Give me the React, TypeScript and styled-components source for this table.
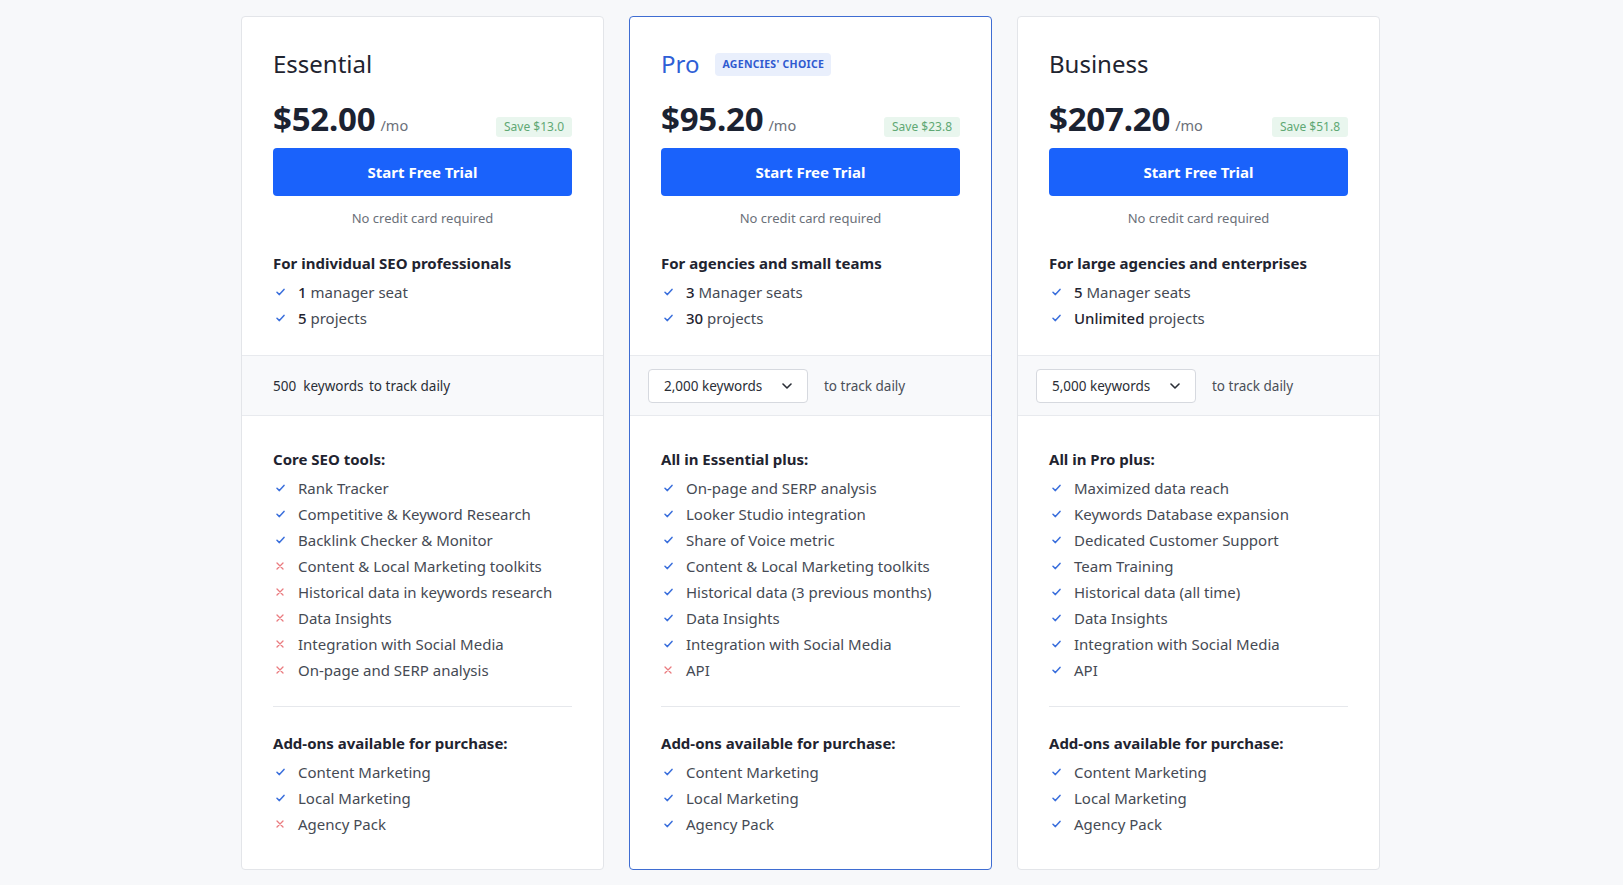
import styled, { createGlobalStyle } from 'styled-components';

type Feature = { label: string; strong?: string; included: boolean };

type Plan = {
  name: string;
  badge?: string;
  highlighted?: boolean;
  price: string;
  save: string;
  audience: string;
  seats: Feature[];
  keywords: string;
  selectable?: boolean;
  featuresTitle: string;
  features: Feature[];
  addons: Feature[];
};

const yes = (label: string, strong?: string): Feature => ({ label, strong, included: true });
const no = (label: string): Feature => ({ label, included: false });

const plans: Plan[] = [
  {
    name: 'Essential',
    price: '$52.00',
    save: 'Save $13.0',
    audience: 'For individual SEO professionals',
    seats: [yes('manager seat', '1'), yes('projects', '5')],
    keywords: '500',
    featuresTitle: 'Core SEO tools:',
    features: [
      yes('Rank Tracker'),
      yes('Competitive & Keyword Research'),
      yes('Backlink Checker & Monitor'),
      no('Content & Local Marketing toolkits'),
      no('Historical data in keywords research'),
      no('Data Insights'),
      no('Integration with Social Media'),
      no('On-page and SERP analysis'),
    ],
    addons: [yes('Content Marketing'), yes('Local Marketing'), no('Agency Pack')],
  },
  {
    name: 'Pro',
    badge: "Agencies' choice",
    highlighted: true,
    price: '$95.20',
    save: 'Save $23.8',
    audience: 'For agencies and small teams',
    seats: [yes('Manager seats', '3'), yes('projects', '30')],
    keywords: '2,000 keywords',
    selectable: true,
    featuresTitle: 'All in Essential plus:',
    features: [
      yes('On-page and SERP analysis'),
      yes('Looker Studio integration'),
      yes('Share of Voice metric'),
      yes('Content & Local Marketing toolkits'),
      yes('Historical data (3 previous months)'),
      yes('Data Insights'),
      yes('Integration with Social Media'),
      no('API'),
    ],
    addons: [yes('Content Marketing'), yes('Local Marketing'), yes('Agency Pack')],
  },
  {
    name: 'Business',
    price: '$207.20',
    save: 'Save $51.8',
    audience: 'For large agencies and enterprises',
    seats: [yes('Manager seats', '5'), yes('projects', 'Unlimited')],
    keywords: '5,000 keywords',
    selectable: true,
    featuresTitle: 'All in Pro plus:',
    features: [
      yes('Maximized data reach'),
      yes('Keywords Database expansion'),
      yes('Dedicated Customer Support'),
      yes('Team Training'),
      yes('Historical data (all time)'),
      yes('Data Insights'),
      yes('Integration with Social Media'),
      yes('API'),
    ],
    addons: [yes('Content Marketing'), yes('Local Marketing'), yes('Agency Pack')],
  },
];

function CheckIcon() {
  return (
    <svg width="9" height="8" viewBox="0 0 9 8" fill="none">
      <path d="M1 4.3 L3.4 6.6 L8 1.4" stroke="#3a6fdc" strokeWidth="1.5" strokeLinecap="round" strokeLinejoin="round" />
    </svg>
  );
}

function CrossIcon() {
  return (
    <svg width="8" height="8" viewBox="0 0 8 8" fill="none">
      <path d="M1 1 L7 7 M7 1 L1 7" stroke="#ea7b7f" strokeWidth="1.3" strokeLinecap="round" />
    </svg>
  );
}

function FeatureList({ items }: { items: Feature[] }) {
  return (
    <List role="list">
      {items.map((item, i) => (
        <Item key={i}>
          <Mark>{item.included ? <CheckIcon /> : <CrossIcon />}</Mark>
          <span>
            {item.strong && <Strong>{item.strong} </Strong>}
            {item.label}
          </span>
        </Item>
      ))}
    </List>
  );
}

function PlanCard({ plan }: { plan: Plan }) {
  return (
    <Card $highlighted={plan.highlighted}>
      <Top>
        <TitleRow>
          <Title $highlighted={plan.highlighted}>{plan.name}</Title>
          {plan.badge && <Badge>{plan.badge}</Badge>}
        </TitleRow>
        <PriceRow>
          <Price>{plan.price}</Price>
          <Period>/mo</Period>
          <Save>{plan.save}</Save>
        </PriceRow>
        <TrialButton>Start Free Trial</TrialButton>
        <Note>No credit card required</Note>
        <Heading>{plan.audience}</Heading>
        <FeatureList items={plan.seats} />
      </Top>
      <KeywordBand>
        {plan.selectable ? (
          <>
            <Select>
              {plan.keywords}
              <svg width="10" height="6" viewBox="0 0 10 6" fill="none">
                <path d="M1 1 L5 5 L9 1" stroke="#2a2e36" strokeWidth="1.6" strokeLinecap="round" strokeLinejoin="round" />
              </svg>
            </Select>
            <TrackText>to track daily</TrackText>
          </>
        ) : (
          <FixedKeywords>
            {plan.keywords}&nbsp;&nbsp;keywords <span>to track daily</span>
          </FixedKeywords>
        )}
      </KeywordBand>
      <Bottom>
        <Heading>{plan.featuresTitle}</Heading>
        <FeatureList items={plan.features} />
        <Divider />
        <Heading>Add-ons available for purchase:</Heading>
        <FeatureList items={plan.addons} />
      </Bottom>
    </Card>
  );
}

export default function App() {
  return (
    <>
      <GlobalStyle />
      <Page>
        {plans.map(plan => (
          <PlanCard key={plan.name} plan={plan} />
        ))}
      </Page>
    </>
  );
}

const GlobalStyle = createGlobalStyle`
  body {
    margin: 0;
    background: #f7f8fa;
    font-family: "Noto Sans", "Open Sans", sans-serif;
    color: #1f2430;
  }
`;

const Page = styled.div`
  display: flex;
  justify-content: center;
  align-items: stretch;
  gap: 25px;
  padding: 16px 2px 17px 0;
`;

const Card = styled.div<{ $highlighted?: boolean }>`
  display: flex;
  flex-direction: column;
  width: 363px;
  box-sizing: border-box;
  background: #fff;
  border: 1px solid ${p => (p.$highlighted ? '#3f6dd2' : '#e3e5e9')};
  border-radius: 4px;
`;

const Top = styled.div`
  display: flex;
  flex-direction: column;
  padding: 32px 31px 24px;
`;

const TitleRow = styled.div`
  display: flex;
  align-items: center;
  gap: 16px;
  height: 30px;
`;

const Title = styled.h2<{ $highlighted?: boolean }>`
  margin: 0;
  font-size: 24px;
  font-weight: 400;
  line-height: 30px;
  color: ${p => (p.$highlighted ? '#2f5fd6' : '#1f2430')};
`;

const Badge = styled.span`
  padding: 5px 7px;
  border-radius: 4px;
  background: #e9effc;
  color: #2f5ad0;
  font-size: 10.5px;
  font-weight: 700;
  letter-spacing: 0.3px;
  text-transform: uppercase;
  line-height: 13px;
`;

const PriceRow = styled.div`
  display: flex;
  align-items: baseline;
  margin-top: 20px;
  height: 40px;
`;

const Price = styled.span`
  font-size: 33px;
  font-weight: 700;
  line-height: 40px;
  color: #1b2231;
  letter-spacing: -0.2px;
`;

const Period = styled.span`
  margin-left: 5px;
  font-size: 14.5px;
  color: #6b7079;
`;

const Save = styled.span`
  margin-left: auto;
  padding: 2px 8px;
  border-radius: 3px;
  background: #e9f6ee;
  color: #5fa874;
  font-size: 12px;
  line-height: 16px;
`;

const TrialButton = styled.button`
  margin-top: 9px;
  height: 48px;
  border: none;
  border-radius: 4px;
  background: #1a62fb;
  color: #fff;
  font-family: inherit;
  font-size: 15px;
  font-weight: 700;
  cursor: pointer;
`;

const Note = styled.p`
  margin: 12px 0 24px;
  text-align: center;
  font-size: 13px;
  line-height: 20px;
  color: #6b7079;
`;

const Heading = styled.h3`
  margin: 0;
  font-size: 15px;
  font-weight: 700;
  line-height: 22px;
  color: #1f2430;
`;

const List = styled.ul`
  display: grid;
  list-style: none;
  margin: 5px 0 0;
  padding: 0;
`;

const Item = styled.li`
  display: flex;
  align-items: center;
  height: 26px;
  font-size: 15px;
  color: #454a54;
`;

const Mark = styled.span`
  display: flex;
  width: 25px;
  padding-left: 3px;
  box-sizing: border-box;
`;

const Strong = styled.span`
  color: #1f2430;
  font-weight: 500;
`;

const KeywordBand = styled.div`
  display: flex;
  align-items: center;
  gap: 16px;
  height: 59px;
  padding: 0 31px 0 18px;
  background: #f8f9fb;
  border-top: 1px solid #e8eaee;
  border-bottom: 1px solid #e8eaee;
`;

const FixedKeywords = styled.span`
  padding-left: 13px;
  font-size: 13.5px;
  color: #2a2e36;

  span {
    margin-left: 2px;
  }
`;

const Select = styled.div`
  display: flex;
  align-items: center;
  justify-content: space-between;
  box-sizing: border-box;
  width: 160px;
  height: 34px;
  padding: 0 15px;
  background: #fff;
  border: 1px solid #d6d9df;
  border-radius: 4px;
  font-size: 13.5px;
  color: #2a2e36;
`;

const TrackText = styled.span`
  font-size: 13.5px;
  color: #4a4f58;
`;

const Bottom = styled.div`
  display: flex;
  flex-direction: column;
  padding: 32px 31px 32px;
`;

const Divider = styled.hr`
  width: 100%;
  margin: 23px 0 25px;
  border: none;
  border-top: 1px solid #e6e8ec;
`;
